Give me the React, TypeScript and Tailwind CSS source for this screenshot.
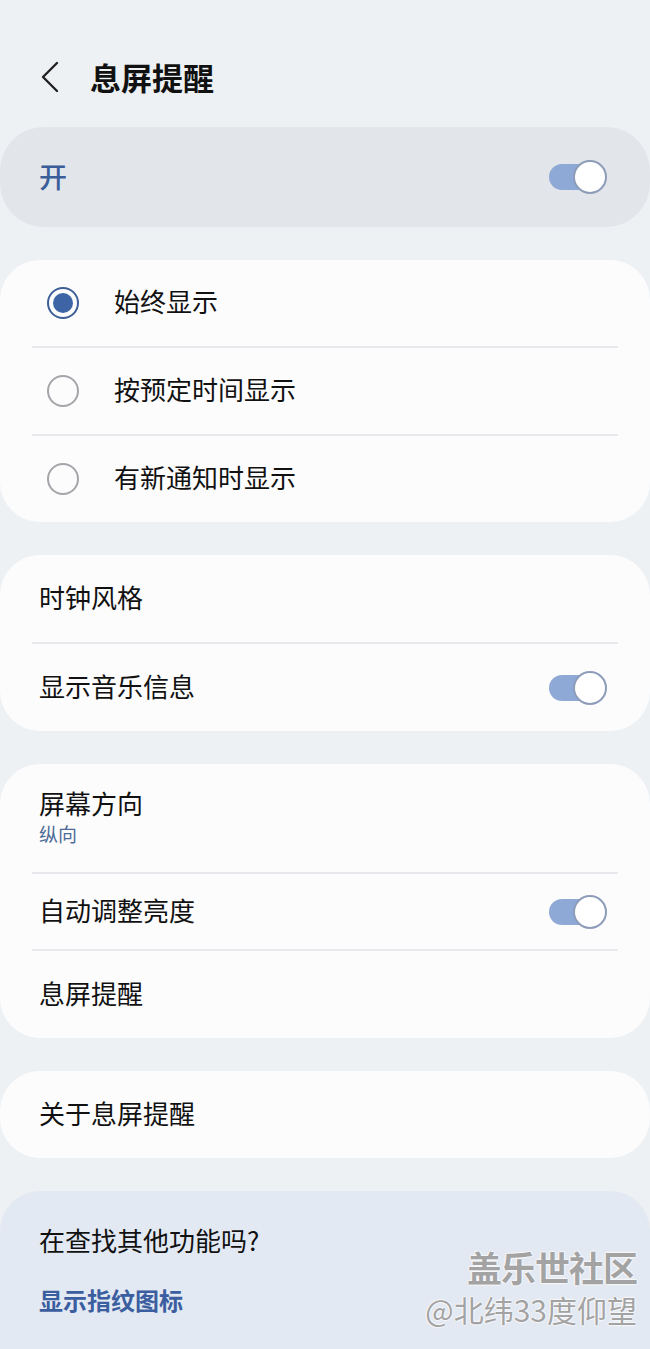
const font = { fontFamily: '"Noto Sans CJK SC", "Noto Sans", sans-serif' };

const Toggle = () => (
  <div className="relative w-[58px] h-[34px] flex items-center">
    <div className="w-[50px] h-[26px] rounded-full bg-[#8ea9d6]" />
    <div className="absolute right-0 top-0 w-[34px] h-[34px] rounded-full bg-white border-2 border-[#8c9cb9]" />
  </div>
);

const Radio = ({ on }: { on?: boolean }) =>
  on ? (
    <div className="w-[32px] h-[32px] rounded-full border-2 border-[#3d5f98] flex items-center justify-center">
      <div className="w-[20px] h-[20px] rounded-full bg-[#3d64a5]" />
    </div>
  ) : (
    <div className="w-[32px] h-[32px] rounded-full border-2 border-[#a3a5a8]" />
  );

const Divider = () => <div className="mx-[32px] h-[2px] bg-[#e8e9ec]" />;

export default function App() {
  const radios = [
    { label: "始终显示", on: true },
    { label: "按预定时间显示" },
    { label: "有新通知时显示" },
  ];

  return (
    <div className="h-screen bg-[#eef1f4] text-[#111] overflow-hidden relative" style={font}>
      {/* Header */}
      <div className="h-[127px] flex items-center pl-[40px] pt-[26px]">
        <svg width="20" height="32" viewBox="0 0 20 32" fill="none">
          <path d="M17 2 L3 16 L17 30" stroke="#222" strokeWidth="2.4" strokeLinecap="round" strokeLinejoin="round" />
        </svg>
        <h1 className="ml-[30px] text-[31px] font-bold leading-none">息屏提醒</h1>
      </div>

      {/* Master switch */}
      <div className="h-[100px] rounded-[44px] bg-[#e2e5e9] flex items-center justify-between pl-[39px] pr-[43px]">
        <span className="text-[28px] text-[#3b5e9a] font-medium pb-[2px]">开</span>
        <Toggle />
      </div>

      {/* Radio options */}
      <div className="mt-[33px] rounded-[40px] bg-[#fcfcfd]">
        {radios.map((r, i) => (
          <div key={r.label}>
            {i > 0 && <Divider />}
            <div className="h-[86px] flex items-center pl-[47px]">
              <Radio on={r.on} />
              <span className="ml-[35px] text-[26px] leading-none pb-[4px]">{r.label}</span>
            </div>
          </div>
        ))}
      </div>

      {/* Clock / music */}
      <div className="mt-[33px] rounded-[40px] bg-[#fcfcfd]">
        <div className="h-[87px] flex items-center pl-[39px]">
          <span className="text-[26px] leading-none pb-[4px]">时钟风格</span>
        </div>
        <Divider />
        <div className="h-[87px] flex items-center justify-between pl-[39px] pr-[43px]">
          <span className="text-[26px] leading-none pb-[4px]">显示音乐信息</span>
          <Toggle />
        </div>
      </div>

      {/* Screen options */}
      <div className="mt-[33px] rounded-[40px] bg-[#fcfcfd]">
        <div className="h-[108px] flex flex-col justify-center pl-[39px] pb-[2px]">
          <span className="text-[26px] leading-[34px]">屏幕方向</span>
          <span className="text-[19px] leading-[28px] text-[#4c6b96]">纵向</span>
        </div>
        <Divider />
        <div className="h-[75px] flex items-center justify-between pl-[39px] pr-[43px]">
          <span className="text-[26px] leading-none pb-[4px]">自动调整亮度</span>
          <Toggle />
        </div>
        <Divider />
        <div className="h-[87px] flex items-center pl-[39px]">
          <span className="text-[26px] leading-none pb-[4px]">息屏提醒</span>
        </div>
      </div>

      {/* About */}
      <div className="mt-[33px] h-[87px] rounded-[40px] bg-[#fcfcfd] flex items-center pl-[39px]">
        <span className="text-[26px] leading-none pb-[4px]">关于息屏提醒</span>
      </div>

      {/* Suggestions */}
      <div className="mt-[33px] rounded-t-[40px] bg-[#e3e9f2] pl-[39px] pt-[31px] flex flex-col gap-[24px]">
        <span className="text-[26px] leading-[36px]">在查找其他功能吗?</span>
        <span className="text-[24px] leading-[36px] font-bold text-[#3b5ea0]">显示指纹图标</span>
        <span className="text-[24px] leading-[36px] font-bold text-[#3b5ea0]">显示音乐信息</span>
      </div>

      {/* Watermark */}
      <div className="absolute right-[13px] top-[1245px] flex flex-col items-end text-[#a3a3a3] [text-shadow:0_0_2px_#fff,0_0_2px_#fff,0_0_2px_#fff]">
        <span className="text-[35px] leading-[44px] font-bold tracking-[-1px]">盖乐世社区</span>
        <span className="text-[30px] leading-[40px]">@北纬33度仰望</span>
      </div>
    </div>
  );
}
